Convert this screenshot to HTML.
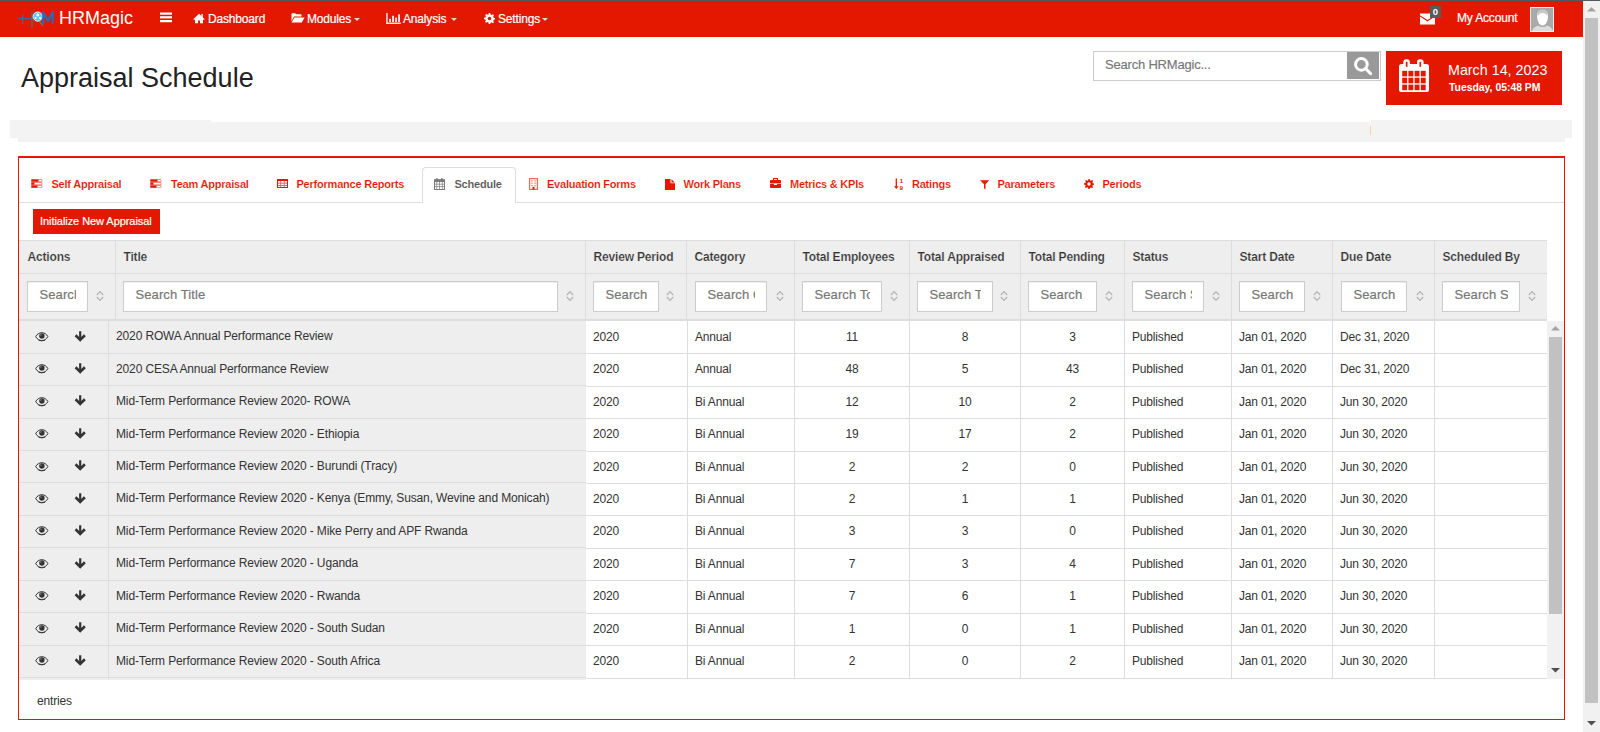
<!DOCTYPE html><html><head><meta charset='utf-8'><title>Appraisal Schedule</title><style>
*{box-sizing:border-box;margin:0;padding:0}
html,body{width:1600px;height:732px;overflow:hidden;background:#fff}
body{position:relative;font-family:"Liberation Sans",sans-serif;color:#333}
.ab{position:absolute}
.t{position:absolute;white-space:nowrap}
.s12{letter-spacing:-0.17px}.s11{letter-spacing:-0.22px}.s13{letter-spacing:-0.2px}
svg{position:absolute;display:block}
</style></head><body>
<div class='ab' style='left:0;top:0;width:1600px;height:1px;background:#4f5a5d'></div>
<div class='ab' style='left:0;top:1px;width:1583px;height:36px;background:#e41800'></div>
<svg style='left:18px;top:11px' width='36' height='18' viewBox='0 0 36 18'>
<path d='M0.7 7.6H13' stroke='#3b6aa3' stroke-width='1.3'/>
<path d='M4.7 3.8V13' stroke='#3b6aa3' stroke-width='1.3'/>
<path d='M14 0.8V16.5' stroke='#6b5c5c' stroke-width='1.8'/>
<path d='M21 9.5L25 15' stroke='#6f6f6f' stroke-width='1.4'/>
<circle cx='19.7' cy='5.6' r='4.6' fill='#58c6f2' stroke='#e8f6fb' stroke-width='0.9'/>
<circle cx='19.8' cy='4' r='1.5' fill='#fff'/>
<circle cx='17.6' cy='7' r='1.1' fill='#fff'/><circle cx='22' cy='7' r='1.1' fill='#fff'/>
<path d='M25.4 12.8V1.6L30 9.8L34.6 1.6V12.8' stroke='#1d6fc2' stroke-width='2.1' fill='none'/>
</svg>
<div class='t' style='left:59px;top:9px;font-size:18px;line-height:18px;color:#fff'>HRMagic</div>
<svg style='left:160px;top:12px' width='12' height='11'><rect x='0' y='0.5' width='12' height='2.2' fill='#fff'/><rect x='0' y='4.2' width='12' height='2.2' fill='#fff'/><rect x='0' y='8' width='12' height='2.2' fill='#fff'/></svg>
<svg style='left:193px;top:13px' width='12' height='11' viewBox='0 0 12 11'><path d='M6 0.8L0.3 6.2L1.2 7L2 6.3V10.2H5V7.5H7V10.2H10V6.3L10.8 7L11.7 6.2L9.8 4.4V1H8.4V3.1Z' fill='#fff'/></svg>
<div class='t s12' style='left:208px;top:13px;font-size:12px;line-height:12px;color:#fff;-webkit-text-stroke:0.2px #fff'>Dashboard</div>
<svg style='left:291px;top:13px' width='14' height='10' viewBox='0 0 14 10'><path d='M0.5 1.2Q0.5 0.3 1.4 0.3H4.2L5.2 1.3H9.6Q10.5 1.3 10.5 2.2V3.6H3L0.5 8.2Z' fill='#fff'/><path d='M3.4 4.4H13.6L10.8 9.6H0.6Z' fill='#fff'/></svg>
<div class='t s12' style='left:307px;top:13px;font-size:12px;line-height:12px;color:#fff;-webkit-text-stroke:0.2px #fff'>Modules</div>
<svg style='left:354px;top:18px' width='6' height='3'><path d='M0 0H6L3 3Z' fill='#d8d8d8'/></svg>
<svg style='left:386px;top:13px' width='15' height='11' viewBox='0 0 15 11'><rect x='0.3' y='0' width='1.3' height='11' fill='#fff'/><rect x='0.3' y='9.6' width='14.5' height='1.3' fill='#fff'/><rect x='3.2' y='5.8' width='1.7' height='3.3' fill='#fff'/><rect x='6.2' y='2.8' width='1.7' height='6.3' fill='#fff'/><rect x='9.2' y='4.6' width='1.7' height='4.5' fill='#fff'/><rect x='12.2' y='1.4' width='1.7' height='7.7' fill='#fff'/></svg>
<div class='t s12' style='left:403px;top:13px;font-size:12px;line-height:12px;color:#fff;-webkit-text-stroke:0.2px #fff'>Analysis</div>
<svg style='left:451px;top:18px' width='6' height='3'><path d='M0 0H6L3 3Z' fill='#d8d8d8'/></svg>
<svg style='left:484px;top:13px' width='11' height='11' viewBox='0 0 12 12'><path d='M5.2 0h1.6l.3 1.6q.7.2 1.3.6l1.4-.9 1.1 1.1-.9 1.4q.4.6.6 1.3l1.6.3v1.6l-1.6.3q-.2.7-.6 1.3l.9 1.4-1.1 1.1-1.4-.9q-.6.4-1.3.6L6.8 12H5.2l-.3-1.6q-.7-.2-1.3-.6l-1.4.9-1.1-1.1.9-1.4q-.4-.6-.6-1.3L0 6.8V5.2l1.6-.3q.2-.7.6-1.3l-.9-1.4 1.1-1.1 1.4.9q.6-.4 1.3-.6ZM6 4a2 2 0 1 0 0 4a2 2 0 1 0 0-4Z' fill='#fff' fill-rule='evenodd'/></svg>
<div class='t s12' style='left:498px;top:13px;font-size:12px;line-height:12px;color:#fff;-webkit-text-stroke:0.2px #fff'>Settings</div>
<svg style='left:542px;top:18px' width='6' height='3'><path d='M0 0H6L3 3Z' fill='#d8d8d8'/></svg>
<svg style='left:1420px;top:13px' width='15' height='12' viewBox='0 0 15 12'><path d='M0 0.5H15V2.2L7.5 7L0 2.2Z' fill='#fff'/><path d='M0 3.6L7.5 8.4L15 3.6V11.5H0Z' fill='#fff'/></svg>
<div class='ab' style='left:1430px;top:6px;width:11px;height:12px;background:#5b5b5b'></div>
<div class='t' style='left:1430px;width:11px;text-align:center;top:7px;font-size:9.5px;line-height:10px;color:#fff;font-weight:bold'>0</div>
<div class='t s12' style='left:1457px;top:12px;font-size:12px;line-height:12px;color:#fff;-webkit-text-stroke:0.2px #fff'>My Account</div>
<div class='ab' style='left:1530px;top:7px;width:24px;height:25px;background:#e8f4f4;overflow:hidden'>
<div class='ab' style='left:1px;top:1px;width:22px;height:23px;background:#a9a9a9'></div>
<svg style='left:1px;top:1px' width='23' height='23' viewBox='0 0 23 23'>
<path d='M6 8q0-6 5.5-6t5.5 6q0 5-2 7.5q-1.5 2-3.5 2t-3.5-2q-2-2.5-2-7.5Z' fill='#fff'/>
<path d='M6.5 6q0-4.5 5-4.5t5 4.5l-.5 2q-1-3-4.5-3t-4.5 3Z' fill='#c8c8c8'/>
<path d='M1 23q1-4 6-5.5q2 1.5 4.5 1.5t4.5-1.5q5 1.5 6 5.5Z' fill='#dcdcdc'/>
</svg></div>
<div class='ab' style='left:1583px;top:1px;width:17px;height:731px;background:#f1f1f1'></div>
<svg style='left:1587px;top:7px' width='9' height='5'><path d='M0 4.5L4.5 0L9 4.5Z' fill='#a3a3a3'/></svg>
<div class='ab' style='left:1585px;top:18px;width:13px;height:685px;background:#c1c1c1'></div>
<svg style='left:1587px;top:721px' width='9' height='5'><path d='M0 0H9L4.5 4.5Z' fill='#505050'/></svg>
<div class='t' style='left:21px;top:65px;font-size:27px;line-height:27px;color:#222'>Appraisal Schedule</div>
<div class='ab' style='left:1093px;top:51px;width:288px;height:30px;border:1px solid #ccc;background:#fff'></div>
<div class='t' style='left:1105px;top:58px;font-size:13px;line-height:13px;color:#777;letter-spacing:-0.2px;-webkit-text-stroke:0.15px #777'>Search HRMagic...</div>
<div class='ab' style='left:1347px;top:52px;width:32px;height:27px;background:#999'></div>
<svg style='left:1354px;top:57px' width='19' height='19' viewBox='0 0 19 19'><circle cx='7.4' cy='7.4' r='5.8' stroke='#fff' stroke-width='3' fill='none'/><path d='M11.5 11.5L16.6 16.6' stroke='#fff' stroke-width='3' stroke-linecap='round'/></svg>
<div class='ab' style='left:1386px;top:51px;width:176px;height:54px;background:#e41800'></div>
<svg style='left:1399px;top:59px' width='31' height='34' viewBox='0 0 31 34'><path d='M2.5 5Q0 5 0 7.5V31Q0 33 2 33H28Q30 33 30 31V7.5Q30 5 27.5 5Z' fill='#fff'/><rect x='4.3' y='0.3' width='6.6' height='8.6' rx='3' fill='#fff'/><rect x='18' y='0.3' width='6.6' height='8.6' rx='3' fill='#fff'/><rect x='6.8' y='2.8' width='1.7' height='5' fill='#e41800'/><rect x='20.5' y='2.8' width='1.7' height='5' fill='#e41800'/><rect x='3.2' y='11.8' width='4.9' height='5.6' fill='#e41800'/><rect x='3.2' y='18.7' width='4.9' height='5.6' fill='#e41800'/><rect x='3.2' y='25.6' width='4.9' height='5.6' fill='#e41800'/><rect x='9.4' y='11.8' width='4.9' height='5.6' fill='#e41800'/><rect x='9.4' y='18.7' width='4.9' height='5.6' fill='#e41800'/><rect x='9.4' y='25.6' width='4.9' height='5.6' fill='#e41800'/><rect x='15.6' y='11.8' width='4.9' height='5.6' fill='#e41800'/><rect x='15.6' y='18.7' width='4.9' height='5.6' fill='#e41800'/><rect x='15.6' y='25.6' width='4.9' height='5.6' fill='#e41800'/><rect x='21.8' y='11.8' width='4.9' height='5.6' fill='#e41800'/><rect x='21.8' y='18.7' width='4.9' height='5.6' fill='#e41800'/><rect x='21.8' y='25.6' width='4.9' height='5.6' fill='#e41800'/></svg>
<div class='t' style='left:1448px;top:63px;font-size:14.3px;line-height:14px;color:#fff'>March 14, 2023</div>
<div class='t' style='left:1449px;top:82px;font-size:10.4px;line-height:11px;color:#fff;font-weight:bold'>Tuesday, 05:48 PM</div>
<div class='ab' style='left:10px;top:120px;width:201px;height:18px;background:#f3f3f3'></div>
<div class='ab' style='left:18px;top:122px;width:1547px;height:20px;background:#f3f3f3'></div>
<div class='ab' style='left:1371px;top:120px;width:201px;height:18px;background:#f3f3f3'></div>
<div class='ab' style='left:1370px;top:126px;width:1px;height:9px;background:#f3d894'></div>
<div class='ab' style='left:18px;top:156px;width:1547px;height:564px;border:1px solid #e41800;border-top-width:2px'></div>
<div class='ab' style='left:19px;top:202px;width:1545px;height:1px;background:#ddd'></div>
<div class='ab' style='left:422px;top:167px;width:94px;height:36px;border:1px solid #ddd;border-bottom:0;border-radius:4px 4px 0 0;background:#fff'></div>
<svg style='left:30.5px;top:179px' width='12' height='9' viewBox='0 0 12 9'><rect x='0.45' y='0.45' width='10.6' height='2.3' rx='0.5' fill='none' stroke='#e41800' stroke-width='0.9' opacity='0.55'/><rect x='0.5' y='0.5' width='7' height='2.2' fill='#e41800'/><rect x='0.45' y='3.45' width='10.6' height='2.3' rx='0.5' fill='none' stroke='#e41800' stroke-width='0.9' opacity='0.55'/><rect x='0.5' y='3.5' width='3' height='2.2' fill='#e41800'/><rect x='0.45' y='6.45' width='10.6' height='2.3' rx='0.5' fill='none' stroke='#e41800' stroke-width='0.9' opacity='0.55'/><rect x='0.5' y='6.5' width='6' height='2.2' fill='#e41800'/></svg>
<div class='t s11' style='left:51.5px;top:179px;font-size:11px;line-height:11px;font-weight:bold;color:#e41800;-webkit-text-stroke:0.12px #fff'>Self Appraisal</div>
<svg style='left:150px;top:179px' width='12' height='9' viewBox='0 0 12 9'><rect x='0.45' y='0.45' width='10.6' height='2.3' rx='0.5' fill='none' stroke='#e41800' stroke-width='0.9' opacity='0.55'/><rect x='0.5' y='0.5' width='7' height='2.2' fill='#e41800'/><rect x='0.45' y='3.45' width='10.6' height='2.3' rx='0.5' fill='none' stroke='#e41800' stroke-width='0.9' opacity='0.55'/><rect x='0.5' y='3.5' width='3' height='2.2' fill='#e41800'/><rect x='0.45' y='6.45' width='10.6' height='2.3' rx='0.5' fill='none' stroke='#e41800' stroke-width='0.9' opacity='0.55'/><rect x='0.5' y='6.5' width='6' height='2.2' fill='#e41800'/></svg>
<div class='t s11' style='left:171px;top:179px;font-size:11px;line-height:11px;font-weight:bold;color:#e41800;-webkit-text-stroke:0.12px #fff'>Team Appraisal</div>
<svg style='left:277px;top:179px' width='11' height='9' viewBox='0 0 11 9'><rect x='0.5' y='0.5' width='10' height='8' fill='none' stroke='#e41800' stroke-width='1'/><rect x='0' y='0' width='11' height='2' fill='#e41800'/><path d='M0 4.2H11M0 6.5H11M3.7 0V9M7.3 0V9' stroke='#e41800' stroke-width='0.9' opacity='0.7'/></svg>
<div class='t s11' style='left:296.5px;top:179px;font-size:11px;line-height:11px;font-weight:bold;color:#e41800;-webkit-text-stroke:0.12px #fff'>Performance Reports</div>
<svg style='left:434px;top:178px' width='11' height='12' viewBox='0 0 11 12'><rect x='0.5' y='1.8' width='10' height='9.7' fill='none' stroke='#7a7a7a' stroke-width='1'/><rect x='0' y='1.5' width='11' height='2.5' fill='#7a7a7a'/><path d='M0 6.2H11M0 8.6H11M2.7 4V12M5.5 4V12M8.3 4V12' stroke='#7a7a7a' stroke-width='0.7'/><rect x='2.3' y='0' width='1.3' height='3' fill='#7a7a7a'/><rect x='7.3' y='0' width='1.3' height='3' fill='#7a7a7a'/></svg>
<div class='t s11' style='left:454.5px;top:179px;font-size:11px;line-height:11px;font-weight:bold;color:#555;-webkit-text-stroke:0.12px #fff'>Schedule</div>
<svg style='left:529px;top:178px' width='9' height='12' viewBox='0 0 9 12'><rect x='0.6' y='0.6' width='7.8' height='10.8' fill='none' stroke='#e41800' stroke-width='1.2' opacity='0.65'/><rect x='2.2' y='2.2' width='1.4' height='1.2' fill='#e41800' opacity='0.6'/><rect x='5.3' y='2.2' width='1.4' height='1.2' fill='#e41800' opacity='0.6'/><rect x='2.2' y='4.6' width='1.4' height='1.2' fill='#e41800' opacity='0.6'/><rect x='5.3' y='4.6' width='1.4' height='1.2' fill='#e41800' opacity='0.6'/><rect x='2.2' y='7' width='1.4' height='1.2' fill='#e41800' opacity='0.6'/><rect x='5.3' y='7' width='1.4' height='1.2' fill='#e41800' opacity='0.6'/><rect x='3.5' y='8.8' width='2' height='2.8' fill='#e41800'/></svg>
<div class='t s11' style='left:547px;top:179px;font-size:11px;line-height:11px;font-weight:bold;color:#e41800;-webkit-text-stroke:0.12px #fff'>Evaluation Forms</div>
<svg style='left:665px;top:178.5px' width='10' height='11' viewBox='0 0 10 11'><path d='M0 0H5.5V4.3H10V11H0Z' fill='#e41800'/><path d='M6.5 0.2L9.8 3.4H6.5Z' fill='#e41800'/></svg>
<div class='t s11' style='left:683.5px;top:179px;font-size:11px;line-height:11px;font-weight:bold;color:#e41800;-webkit-text-stroke:0.12px #fff'>Work Plans</div>
<svg style='left:770px;top:178px' width='11' height='10' viewBox='0 0 11 10'><path d='M3.5 2V0.5H7.5V2' fill='none' stroke='#e41800' stroke-width='1.1'/><rect x='0' y='2' width='11' height='3.2' rx='0.7' fill='#e41800'/><path d='M0 5.8H4V7H7V5.8H11V9.2Q11 10 10.3 10H0.7Q0 10 0 9.2Z' fill='#e41800'/></svg>
<div class='t s11' style='left:790px;top:179px;font-size:11px;line-height:11px;font-weight:bold;color:#e41800;-webkit-text-stroke:0.12px #fff'>Metrics &amp; KPIs</div>
<svg style='left:894px;top:178px' width='10' height='12' viewBox='0 0 10 12'><path d='M2.3 0.5V9' stroke='#e41800' stroke-width='1.3'/><path d='M0 8.3H4.6L2.3 11Z' fill='#e41800'/><text x='5.8' y='5.2' font-family='Liberation Sans' font-size='6.2' font-weight='bold' fill='#e41800'>1</text><text x='5.6' y='11.8' font-family='Liberation Sans' font-size='6.2' font-weight='bold' fill='#e41800'>9</text></svg>
<div class='t s11' style='left:912px;top:179px;font-size:11px;line-height:11px;font-weight:bold;color:#e41800;-webkit-text-stroke:0.12px #fff'>Ratings</div>
<svg style='left:979.5px;top:179.5px' width='10' height='10' viewBox='0 0 10 10'><path d='M0 0.3H9.2L5.5 4.3V9.5L4 8.2V4.3Z' fill='#e41800'/></svg>
<div class='t s11' style='left:997.5px;top:179px;font-size:11px;line-height:11px;font-weight:bold;color:#e41800;-webkit-text-stroke:0.12px #fff'>Parameters</div>
<svg style='left:1084px;top:179px' width='10' height='10' viewBox='0 0 12 12'><path d='M5.2 0h1.6l.3 1.6q.7.2 1.3.6l1.4-.9 1.1 1.1-.9 1.4q.4.6.6 1.3l1.6.3v1.6l-1.6.3q-.2.7-.6 1.3l.9 1.4-1.1 1.1-1.4-.9q-.6.4-1.3.6L6.8 12H5.2l-.3-1.6q-.7-.2-1.3-.6l-1.4.9-1.1-1.1.9-1.4q-.4-.6-.6-1.3L0 6.8V5.2l1.6-.3q.2-.7.6-1.3l-.9-1.4 1.1-1.1 1.4.9q.6-.4 1.3-.6ZM6 4a2 2 0 1 0 0 4a2 2 0 1 0 0-4Z' fill='#e41800' fill-rule='evenodd'/></svg>
<div class='t s11' style='left:1102.5px;top:179px;font-size:11px;line-height:11px;font-weight:bold;color:#e41800;-webkit-text-stroke:0.12px #fff'>Periods</div>
<div class='ab' style='left:33px;top:209px;width:127px;height:25px;background:#e41800'></div>
<div class='t' style='left:40px;top:216px;font-size:11px;line-height:11px;color:#fff;letter-spacing:-0.06px;-webkit-text-stroke:0.2px #fff'>Initialize New Appraisal</div>
<div class='ab' style='left:19px;top:240px;width:1528px;height:81px;background:#eee'></div>
<div class='ab' style='left:19px;top:240px;width:1528px;height:1px;background:#ddd'></div>
<div class='ab' style='left:19px;top:273px;width:1528px;height:1px;background:#ddd'></div>
<div class='ab' style='left:19px;top:319px;width:1528px;height:2px;background:#ddd'></div>
<div class='ab' style='left:115px;top:240px;width:1px;height:81px;background:#ddd'></div>
<div class='ab' style='left:585px;top:240px;width:1px;height:81px;background:#ddd'></div>
<div class='ab' style='left:686px;top:240px;width:1px;height:81px;background:#ddd'></div>
<div class='ab' style='left:794px;top:240px;width:1px;height:81px;background:#ddd'></div>
<div class='ab' style='left:909px;top:240px;width:1px;height:81px;background:#ddd'></div>
<div class='ab' style='left:1020px;top:240px;width:1px;height:81px;background:#ddd'></div>
<div class='ab' style='left:1124px;top:240px;width:1px;height:81px;background:#ddd'></div>
<div class='ab' style='left:1231px;top:240px;width:1px;height:81px;background:#ddd'></div>
<div class='ab' style='left:1332px;top:240px;width:1px;height:81px;background:#ddd'></div>
<div class='ab' style='left:1434px;top:240px;width:1px;height:81px;background:#ddd'></div>
<div class='t s12' style='left:27.5px;top:251px;font-size:12px;line-height:12px;font-weight:bold;color:#333;-webkit-text-stroke:0.2px #eee'>Actions</div>
<div class='ab' style='left:27px;top:281px;width:61px;height:31px;border:1px solid #ccc;background:#fff;box-shadow:inset 0 1px 1px rgba(0,0,0,.075);overflow:hidden'><div class='ab' style='left:11px;top:0;width:37px;height:29px;overflow:hidden'><div class='t' style='left:0.5px;top:6px;font-size:13px;line-height:13px;color:#777;letter-spacing:0.1px;-webkit-text-stroke:0.2px #777'>Search</div></div></div>
<svg style='left:96px;top:290px' width='8' height='12' viewBox='0 0 8 12'><path d='M0.8 5L4 1.6L7.2 5M0.8 7L4 10.4L7.2 7' stroke='#b5b5b5' stroke-width='1.3' fill='none'/></svg>
<div class='t s12' style='left:123.5px;top:251px;font-size:12px;line-height:12px;font-weight:bold;color:#333;-webkit-text-stroke:0.2px #eee'>Title</div>
<div class='ab' style='left:123px;top:281px;width:435px;height:31px;border:1px solid #ccc;background:#fff;box-shadow:inset 0 1px 1px rgba(0,0,0,.075);overflow:hidden'><div class='ab' style='left:11px;top:0;width:411px;height:29px;overflow:hidden'><div class='t' style='left:0.5px;top:6px;font-size:13px;line-height:13px;color:#777;letter-spacing:0.1px;-webkit-text-stroke:0.2px #777'>Search Title</div></div></div>
<svg style='left:566px;top:290px' width='8' height='12' viewBox='0 0 8 12'><path d='M0.8 5L4 1.6L7.2 5M0.8 7L4 10.4L7.2 7' stroke='#b5b5b5' stroke-width='1.3' fill='none'/></svg>
<div class='t s12' style='left:593.5px;top:251px;font-size:12px;line-height:12px;font-weight:bold;color:#333;-webkit-text-stroke:0.2px #eee'>Review Period</div>
<div class='ab' style='left:593px;top:281px;width:66px;height:31px;border:1px solid #ccc;background:#fff;box-shadow:inset 0 1px 1px rgba(0,0,0,.075);overflow:hidden'><div class='ab' style='left:11px;top:0;width:42px;height:29px;overflow:hidden'><div class='t' style='left:0.5px;top:6px;font-size:13px;line-height:13px;color:#777;letter-spacing:0.1px;-webkit-text-stroke:0.2px #777'>Search</div></div></div>
<svg style='left:666px;top:290px' width='8' height='12' viewBox='0 0 8 12'><path d='M0.8 5L4 1.6L7.2 5M0.8 7L4 10.4L7.2 7' stroke='#b5b5b5' stroke-width='1.3' fill='none'/></svg>
<div class='t s12' style='left:694.5px;top:251px;font-size:12px;line-height:12px;font-weight:bold;color:#333;-webkit-text-stroke:0.2px #eee'>Category</div>
<div class='ab' style='left:695px;top:281px;width:72px;height:31px;border:1px solid #ccc;background:#fff;box-shadow:inset 0 1px 1px rgba(0,0,0,.075);overflow:hidden'><div class='ab' style='left:11px;top:0;width:48px;height:29px;overflow:hidden'><div class='t' style='left:0.5px;top:6px;font-size:13px;line-height:13px;color:#777;letter-spacing:0.1px;-webkit-text-stroke:0.2px #777'>Search Category</div></div></div>
<svg style='left:775.5px;top:290px' width='8' height='12' viewBox='0 0 8 12'><path d='M0.8 5L4 1.6L7.2 5M0.8 7L4 10.4L7.2 7' stroke='#b5b5b5' stroke-width='1.3' fill='none'/></svg>
<div class='t s12' style='left:802.5px;top:251px;font-size:12px;line-height:12px;font-weight:bold;color:#333;-webkit-text-stroke:0.2px #eee'>Total Employees</div>
<div class='ab' style='left:802px;top:281px;width:80px;height:31px;border:1px solid #ccc;background:#fff;box-shadow:inset 0 1px 1px rgba(0,0,0,.075);overflow:hidden'><div class='ab' style='left:11px;top:0;width:56px;height:29px;overflow:hidden'><div class='t' style='left:0.5px;top:6px;font-size:13px;line-height:13px;color:#777;letter-spacing:0.1px;-webkit-text-stroke:0.2px #777'>Search Total</div></div></div>
<svg style='left:889.5px;top:290px' width='8' height='12' viewBox='0 0 8 12'><path d='M0.8 5L4 1.6L7.2 5M0.8 7L4 10.4L7.2 7' stroke='#b5b5b5' stroke-width='1.3' fill='none'/></svg>
<div class='t s12' style='left:917.5px;top:251px;font-size:12px;line-height:12px;font-weight:bold;color:#333;-webkit-text-stroke:0.2px #eee'>Total Appraised</div>
<div class='ab' style='left:917px;top:281px;width:76px;height:31px;border:1px solid #ccc;background:#fff;box-shadow:inset 0 1px 1px rgba(0,0,0,.075);overflow:hidden'><div class='ab' style='left:11px;top:0;width:52px;height:29px;overflow:hidden'><div class='t' style='left:0.5px;top:6px;font-size:13px;line-height:13px;color:#777;letter-spacing:0.1px;-webkit-text-stroke:0.2px #777'>Search Total</div></div></div>
<svg style='left:1000px;top:290px' width='8' height='12' viewBox='0 0 8 12'><path d='M0.8 5L4 1.6L7.2 5M0.8 7L4 10.4L7.2 7' stroke='#b5b5b5' stroke-width='1.3' fill='none'/></svg>
<div class='t s12' style='left:1028.5px;top:251px;font-size:12px;line-height:12px;font-weight:bold;color:#333;-webkit-text-stroke:0.2px #eee'>Total Pending</div>
<div class='ab' style='left:1028px;top:281px;width:69px;height:31px;border:1px solid #ccc;background:#fff;box-shadow:inset 0 1px 1px rgba(0,0,0,.075);overflow:hidden'><div class='ab' style='left:11px;top:0;width:45px;height:29px;overflow:hidden'><div class='t' style='left:0.5px;top:6px;font-size:13px;line-height:13px;color:#777;letter-spacing:0.1px;-webkit-text-stroke:0.2px #777'>Search</div></div></div>
<svg style='left:1104.5px;top:290px' width='8' height='12' viewBox='0 0 8 12'><path d='M0.8 5L4 1.6L7.2 5M0.8 7L4 10.4L7.2 7' stroke='#b5b5b5' stroke-width='1.3' fill='none'/></svg>
<div class='t s12' style='left:1132.5px;top:251px;font-size:12px;line-height:12px;font-weight:bold;color:#333;-webkit-text-stroke:0.2px #eee'>Status</div>
<div class='ab' style='left:1132px;top:281px;width:72px;height:31px;border:1px solid #ccc;background:#fff;box-shadow:inset 0 1px 1px rgba(0,0,0,.075);overflow:hidden'><div class='ab' style='left:11px;top:0;width:48px;height:29px;overflow:hidden'><div class='t' style='left:0.5px;top:6px;font-size:13px;line-height:13px;color:#777;letter-spacing:0.1px;-webkit-text-stroke:0.2px #777'>Search Status</div></div></div>
<svg style='left:1211.5px;top:290px' width='8' height='12' viewBox='0 0 8 12'><path d='M0.8 5L4 1.6L7.2 5M0.8 7L4 10.4L7.2 7' stroke='#b5b5b5' stroke-width='1.3' fill='none'/></svg>
<div class='t s12' style='left:1239.5px;top:251px;font-size:12px;line-height:12px;font-weight:bold;color:#333;-webkit-text-stroke:0.2px #eee'>Start Date</div>
<div class='ab' style='left:1239px;top:281px;width:66px;height:31px;border:1px solid #ccc;background:#fff;box-shadow:inset 0 1px 1px rgba(0,0,0,.075);overflow:hidden'><div class='ab' style='left:11px;top:0;width:42px;height:29px;overflow:hidden'><div class='t' style='left:0.5px;top:6px;font-size:13px;line-height:13px;color:#777;letter-spacing:0.1px;-webkit-text-stroke:0.2px #777'>Search</div></div></div>
<svg style='left:1312.5px;top:290px' width='8' height='12' viewBox='0 0 8 12'><path d='M0.8 5L4 1.6L7.2 5M0.8 7L4 10.4L7.2 7' stroke='#b5b5b5' stroke-width='1.3' fill='none'/></svg>
<div class='t s12' style='left:1340.5px;top:251px;font-size:12px;line-height:12px;font-weight:bold;color:#333;-webkit-text-stroke:0.2px #eee'>Due Date</div>
<div class='ab' style='left:1341px;top:281px;width:66px;height:31px;border:1px solid #ccc;background:#fff;box-shadow:inset 0 1px 1px rgba(0,0,0,.075);overflow:hidden'><div class='ab' style='left:11px;top:0;width:42px;height:29px;overflow:hidden'><div class='t' style='left:0.5px;top:6px;font-size:13px;line-height:13px;color:#777;letter-spacing:0.1px;-webkit-text-stroke:0.2px #777'>Search</div></div></div>
<svg style='left:1416px;top:290px' width='8' height='12' viewBox='0 0 8 12'><path d='M0.8 5L4 1.6L7.2 5M0.8 7L4 10.4L7.2 7' stroke='#b5b5b5' stroke-width='1.3' fill='none'/></svg>
<div class='t s12' style='left:1442.5px;top:251px;font-size:12px;line-height:12px;font-weight:bold;color:#333;-webkit-text-stroke:0.2px #eee'>Scheduled By</div>
<div class='ab' style='left:1442px;top:281px;width:78px;height:31px;border:1px solid #ccc;background:#fff;box-shadow:inset 0 1px 1px rgba(0,0,0,.075);overflow:hidden'><div class='ab' style='left:11px;top:0;width:54px;height:29px;overflow:hidden'><div class='t' style='left:0.5px;top:6px;font-size:13px;line-height:13px;color:#777;letter-spacing:0.1px;-webkit-text-stroke:0.2px #777'>Search Scheduled</div></div></div>
<svg style='left:1528px;top:290px' width='8' height='12' viewBox='0 0 8 12'><path d='M0.8 5L4 1.6L7.2 5M0.8 7L4 10.4L7.2 7' stroke='#b5b5b5' stroke-width='1.3' fill='none'/></svg>
<div class='ab' style='left:586px;top:321px;width:961px;height:358px;background:#fff'></div>
<div class='ab' style='left:586px;top:353.12px;width:961px;height:1px;background:#ddd'></div>
<div class='t s12' style='left:593px;top:331px;font-size:12px;line-height:12px'>2020</div>
<div class='t s12' style='left:695px;top:331px;font-size:12px;line-height:12px'>Annual</div>
<div class='t s12' style='left:794.5px;width:115px;text-align:center;top:331px;font-size:12px;line-height:12px'>11</div>
<div class='t s12' style='left:909.5px;width:111px;text-align:center;top:331px;font-size:12px;line-height:12px'>8</div>
<div class='t s12' style='left:1020.5px;width:104px;text-align:center;top:331px;font-size:12px;line-height:12px'>3</div>
<div class='t s12' style='left:1132px;top:331px;font-size:12px;line-height:12px'>Published</div>
<div class='t s12' style='left:1239px;top:331px;font-size:12px;line-height:12px'>Jan 01, 2020</div>
<div class='t s12' style='left:1340px;top:331px;font-size:12px;line-height:12px'>Dec 31, 2020</div>
<div class='ab' style='left:586px;top:385.59px;width:961px;height:1px;background:#ddd'></div>
<div class='t s12' style='left:593px;top:363px;font-size:12px;line-height:12px'>2020</div>
<div class='t s12' style='left:695px;top:363px;font-size:12px;line-height:12px'>Annual</div>
<div class='t s12' style='left:794.5px;width:115px;text-align:center;top:363px;font-size:12px;line-height:12px'>48</div>
<div class='t s12' style='left:909.5px;width:111px;text-align:center;top:363px;font-size:12px;line-height:12px'>5</div>
<div class='t s12' style='left:1020.5px;width:104px;text-align:center;top:363px;font-size:12px;line-height:12px'>43</div>
<div class='t s12' style='left:1132px;top:363px;font-size:12px;line-height:12px'>Published</div>
<div class='t s12' style='left:1239px;top:363px;font-size:12px;line-height:12px'>Jan 01, 2020</div>
<div class='t s12' style='left:1340px;top:363px;font-size:12px;line-height:12px'>Dec 31, 2020</div>
<div class='ab' style='left:586px;top:418.06px;width:961px;height:1px;background:#ddd'></div>
<div class='t s12' style='left:593px;top:396px;font-size:12px;line-height:12px'>2020</div>
<div class='t s12' style='left:695px;top:396px;font-size:12px;line-height:12px'>Bi Annual</div>
<div class='t s12' style='left:794.5px;width:115px;text-align:center;top:396px;font-size:12px;line-height:12px'>12</div>
<div class='t s12' style='left:909.5px;width:111px;text-align:center;top:396px;font-size:12px;line-height:12px'>10</div>
<div class='t s12' style='left:1020.5px;width:104px;text-align:center;top:396px;font-size:12px;line-height:12px'>2</div>
<div class='t s12' style='left:1132px;top:396px;font-size:12px;line-height:12px'>Published</div>
<div class='t s12' style='left:1239px;top:396px;font-size:12px;line-height:12px'>Jan 01, 2020</div>
<div class='t s12' style='left:1340px;top:396px;font-size:12px;line-height:12px'>Jun 30, 2020</div>
<div class='ab' style='left:586px;top:450.53px;width:961px;height:1px;background:#ddd'></div>
<div class='t s12' style='left:593px;top:428px;font-size:12px;line-height:12px'>2020</div>
<div class='t s12' style='left:695px;top:428px;font-size:12px;line-height:12px'>Bi Annual</div>
<div class='t s12' style='left:794.5px;width:115px;text-align:center;top:428px;font-size:12px;line-height:12px'>19</div>
<div class='t s12' style='left:909.5px;width:111px;text-align:center;top:428px;font-size:12px;line-height:12px'>17</div>
<div class='t s12' style='left:1020.5px;width:104px;text-align:center;top:428px;font-size:12px;line-height:12px'>2</div>
<div class='t s12' style='left:1132px;top:428px;font-size:12px;line-height:12px'>Published</div>
<div class='t s12' style='left:1239px;top:428px;font-size:12px;line-height:12px'>Jan 01, 2020</div>
<div class='t s12' style='left:1340px;top:428px;font-size:12px;line-height:12px'>Jun 30, 2020</div>
<div class='ab' style='left:586px;top:483.00px;width:961px;height:1px;background:#ddd'></div>
<div class='t s12' style='left:593px;top:461px;font-size:12px;line-height:12px'>2020</div>
<div class='t s12' style='left:695px;top:461px;font-size:12px;line-height:12px'>Bi Annual</div>
<div class='t s12' style='left:794.5px;width:115px;text-align:center;top:461px;font-size:12px;line-height:12px'>2</div>
<div class='t s12' style='left:909.5px;width:111px;text-align:center;top:461px;font-size:12px;line-height:12px'>2</div>
<div class='t s12' style='left:1020.5px;width:104px;text-align:center;top:461px;font-size:12px;line-height:12px'>0</div>
<div class='t s12' style='left:1132px;top:461px;font-size:12px;line-height:12px'>Published</div>
<div class='t s12' style='left:1239px;top:461px;font-size:12px;line-height:12px'>Jan 01, 2020</div>
<div class='t s12' style='left:1340px;top:461px;font-size:12px;line-height:12px'>Jun 30, 2020</div>
<div class='ab' style='left:586px;top:515.47px;width:961px;height:1px;background:#ddd'></div>
<div class='t s12' style='left:593px;top:493px;font-size:12px;line-height:12px'>2020</div>
<div class='t s12' style='left:695px;top:493px;font-size:12px;line-height:12px'>Bi Annual</div>
<div class='t s12' style='left:794.5px;width:115px;text-align:center;top:493px;font-size:12px;line-height:12px'>2</div>
<div class='t s12' style='left:909.5px;width:111px;text-align:center;top:493px;font-size:12px;line-height:12px'>1</div>
<div class='t s12' style='left:1020.5px;width:104px;text-align:center;top:493px;font-size:12px;line-height:12px'>1</div>
<div class='t s12' style='left:1132px;top:493px;font-size:12px;line-height:12px'>Published</div>
<div class='t s12' style='left:1239px;top:493px;font-size:12px;line-height:12px'>Jan 01, 2020</div>
<div class='t s12' style='left:1340px;top:493px;font-size:12px;line-height:12px'>Jun 30, 2020</div>
<div class='ab' style='left:586px;top:547.94px;width:961px;height:1px;background:#ddd'></div>
<div class='t s12' style='left:593px;top:525px;font-size:12px;line-height:12px'>2020</div>
<div class='t s12' style='left:695px;top:525px;font-size:12px;line-height:12px'>Bi Annual</div>
<div class='t s12' style='left:794.5px;width:115px;text-align:center;top:525px;font-size:12px;line-height:12px'>3</div>
<div class='t s12' style='left:909.5px;width:111px;text-align:center;top:525px;font-size:12px;line-height:12px'>3</div>
<div class='t s12' style='left:1020.5px;width:104px;text-align:center;top:525px;font-size:12px;line-height:12px'>0</div>
<div class='t s12' style='left:1132px;top:525px;font-size:12px;line-height:12px'>Published</div>
<div class='t s12' style='left:1239px;top:525px;font-size:12px;line-height:12px'>Jan 01, 2020</div>
<div class='t s12' style='left:1340px;top:525px;font-size:12px;line-height:12px'>Jun 30, 2020</div>
<div class='ab' style='left:586px;top:580.41px;width:961px;height:1px;background:#ddd'></div>
<div class='t s12' style='left:593px;top:558px;font-size:12px;line-height:12px'>2020</div>
<div class='t s12' style='left:695px;top:558px;font-size:12px;line-height:12px'>Bi Annual</div>
<div class='t s12' style='left:794.5px;width:115px;text-align:center;top:558px;font-size:12px;line-height:12px'>7</div>
<div class='t s12' style='left:909.5px;width:111px;text-align:center;top:558px;font-size:12px;line-height:12px'>3</div>
<div class='t s12' style='left:1020.5px;width:104px;text-align:center;top:558px;font-size:12px;line-height:12px'>4</div>
<div class='t s12' style='left:1132px;top:558px;font-size:12px;line-height:12px'>Published</div>
<div class='t s12' style='left:1239px;top:558px;font-size:12px;line-height:12px'>Jan 01, 2020</div>
<div class='t s12' style='left:1340px;top:558px;font-size:12px;line-height:12px'>Jun 30, 2020</div>
<div class='ab' style='left:586px;top:612.88px;width:961px;height:1px;background:#ddd'></div>
<div class='t s12' style='left:593px;top:590px;font-size:12px;line-height:12px'>2020</div>
<div class='t s12' style='left:695px;top:590px;font-size:12px;line-height:12px'>Bi Annual</div>
<div class='t s12' style='left:794.5px;width:115px;text-align:center;top:590px;font-size:12px;line-height:12px'>7</div>
<div class='t s12' style='left:909.5px;width:111px;text-align:center;top:590px;font-size:12px;line-height:12px'>6</div>
<div class='t s12' style='left:1020.5px;width:104px;text-align:center;top:590px;font-size:12px;line-height:12px'>1</div>
<div class='t s12' style='left:1132px;top:590px;font-size:12px;line-height:12px'>Published</div>
<div class='t s12' style='left:1239px;top:590px;font-size:12px;line-height:12px'>Jan 01, 2020</div>
<div class='t s12' style='left:1340px;top:590px;font-size:12px;line-height:12px'>Jun 30, 2020</div>
<div class='ab' style='left:586px;top:645.35px;width:961px;height:1px;background:#ddd'></div>
<div class='t s12' style='left:593px;top:623px;font-size:12px;line-height:12px'>2020</div>
<div class='t s12' style='left:695px;top:623px;font-size:12px;line-height:12px'>Bi Annual</div>
<div class='t s12' style='left:794.5px;width:115px;text-align:center;top:623px;font-size:12px;line-height:12px'>1</div>
<div class='t s12' style='left:909.5px;width:111px;text-align:center;top:623px;font-size:12px;line-height:12px'>0</div>
<div class='t s12' style='left:1020.5px;width:104px;text-align:center;top:623px;font-size:12px;line-height:12px'>1</div>
<div class='t s12' style='left:1132px;top:623px;font-size:12px;line-height:12px'>Published</div>
<div class='t s12' style='left:1239px;top:623px;font-size:12px;line-height:12px'>Jan 01, 2020</div>
<div class='t s12' style='left:1340px;top:623px;font-size:12px;line-height:12px'>Jun 30, 2020</div>
<div class='ab' style='left:586px;top:677.82px;width:961px;height:1px;background:#ddd'></div>
<div class='t s12' style='left:593px;top:655px;font-size:12px;line-height:12px'>2020</div>
<div class='t s12' style='left:695px;top:655px;font-size:12px;line-height:12px'>Bi Annual</div>
<div class='t s12' style='left:794.5px;width:115px;text-align:center;top:655px;font-size:12px;line-height:12px'>2</div>
<div class='t s12' style='left:909.5px;width:111px;text-align:center;top:655px;font-size:12px;line-height:12px'>0</div>
<div class='t s12' style='left:1020.5px;width:104px;text-align:center;top:655px;font-size:12px;line-height:12px'>2</div>
<div class='t s12' style='left:1132px;top:655px;font-size:12px;line-height:12px'>Published</div>
<div class='t s12' style='left:1239px;top:655px;font-size:12px;line-height:12px'>Jan 01, 2020</div>
<div class='t s12' style='left:1340px;top:655px;font-size:12px;line-height:12px'>Jun 30, 2020</div>
<div class='ab' style='left:687px;top:321px;width:1px;height:358px;background:#ddd'></div>
<div class='ab' style='left:794px;top:321px;width:1px;height:358px;background:#ddd'></div>
<div class='ab' style='left:909px;top:321px;width:1px;height:358px;background:#ddd'></div>
<div class='ab' style='left:1020px;top:321px;width:1px;height:358px;background:#ddd'></div>
<div class='ab' style='left:1124px;top:321px;width:1px;height:358px;background:#ddd'></div>
<div class='ab' style='left:1231px;top:321px;width:1px;height:358px;background:#ddd'></div>
<div class='ab' style='left:1332px;top:321px;width:1px;height:358px;background:#ddd'></div>
<div class='ab' style='left:1434px;top:321px;width:1px;height:358px;background:#ddd'></div>
<div class='ab' style='left:19px;top:321px;width:567px;height:359px;background:#eee'></div>
<div class='ab' style='left:19px;top:352.72px;width:567px;height:1px;background:#ddd'></div>
<div class='t' style='left:116px;top:330px;font-size:12px;line-height:12px;letter-spacing:-0.13px'>2020 ROWA Annual Performance Review</div>
<svg style='left:35px;top:332px' width='14' height='10' viewBox='0 0 14 10'><path d='M0.7 4.6C2.2 1.8 4.5 0.7 6.8 0.7C9.1 0.7 11.4 1.8 12.9 4.6C11.4 7.4 9.1 8.5 6.8 8.5C4.5 8.5 2.2 7.4 0.7 4.6Z' fill='none' stroke='#333' stroke-width='1'/><path d='M3.5 8.2Q6.8 9.6 10.1 8.2' stroke='#333' stroke-width='0.9' fill='none'/><circle cx='6.9' cy='4' r='2.7' fill='#333'/><circle cx='5.9' cy='3' r='0.8' fill='#888'/></svg>
<svg style='left:74px;top:331px' width='12' height='11' viewBox='0 0 12 11'><path d='M5.1 0.2H7.3V5.9L9.9 3.3L11.8 5.2L6.2 10.8L0.6 5.2L2.5 3.3L5.1 5.9Z' fill='#333'/></svg>
<div class='ab' style='left:19px;top:385.14px;width:567px;height:1px;background:#ddd'></div>
<div class='t' style='left:116px;top:363px;font-size:12px;line-height:12px;letter-spacing:-0.13px'>2020 CESA Annual Performance Review</div>
<svg style='left:35px;top:364px' width='14' height='10' viewBox='0 0 14 10'><path d='M0.7 4.6C2.2 1.8 4.5 0.7 6.8 0.7C9.1 0.7 11.4 1.8 12.9 4.6C11.4 7.4 9.1 8.5 6.8 8.5C4.5 8.5 2.2 7.4 0.7 4.6Z' fill='none' stroke='#333' stroke-width='1'/><path d='M3.5 8.2Q6.8 9.6 10.1 8.2' stroke='#333' stroke-width='0.9' fill='none'/><circle cx='6.9' cy='4' r='2.7' fill='#333'/><circle cx='5.9' cy='3' r='0.8' fill='#888'/></svg>
<svg style='left:74px;top:363px' width='12' height='11' viewBox='0 0 12 11'><path d='M5.1 0.2H7.3V5.9L9.9 3.3L11.8 5.2L6.2 10.8L0.6 5.2L2.5 3.3L5.1 5.9Z' fill='#333'/></svg>
<div class='ab' style='left:19px;top:417.56px;width:567px;height:1px;background:#ddd'></div>
<div class='t' style='left:116px;top:395px;font-size:12px;line-height:12px;letter-spacing:-0.13px'>Mid-Term Performance Review 2020- ROWA</div>
<svg style='left:35px;top:397px' width='14' height='10' viewBox='0 0 14 10'><path d='M0.7 4.6C2.2 1.8 4.5 0.7 6.8 0.7C9.1 0.7 11.4 1.8 12.9 4.6C11.4 7.4 9.1 8.5 6.8 8.5C4.5 8.5 2.2 7.4 0.7 4.6Z' fill='none' stroke='#333' stroke-width='1'/><path d='M3.5 8.2Q6.8 9.6 10.1 8.2' stroke='#333' stroke-width='0.9' fill='none'/><circle cx='6.9' cy='4' r='2.7' fill='#333'/><circle cx='5.9' cy='3' r='0.8' fill='#888'/></svg>
<svg style='left:74px;top:395px' width='12' height='11' viewBox='0 0 12 11'><path d='M5.1 0.2H7.3V5.9L9.9 3.3L11.8 5.2L6.2 10.8L0.6 5.2L2.5 3.3L5.1 5.9Z' fill='#333'/></svg>
<div class='ab' style='left:19px;top:449.98px;width:567px;height:1px;background:#ddd'></div>
<div class='t' style='left:116px;top:428px;font-size:12px;line-height:12px;letter-spacing:-0.13px'>Mid-Term Performance Review 2020 - Ethiopia</div>
<svg style='left:35px;top:429px' width='14' height='10' viewBox='0 0 14 10'><path d='M0.7 4.6C2.2 1.8 4.5 0.7 6.8 0.7C9.1 0.7 11.4 1.8 12.9 4.6C11.4 7.4 9.1 8.5 6.8 8.5C4.5 8.5 2.2 7.4 0.7 4.6Z' fill='none' stroke='#333' stroke-width='1'/><path d='M3.5 8.2Q6.8 9.6 10.1 8.2' stroke='#333' stroke-width='0.9' fill='none'/><circle cx='6.9' cy='4' r='2.7' fill='#333'/><circle cx='5.9' cy='3' r='0.8' fill='#888'/></svg>
<svg style='left:74px;top:428px' width='12' height='11' viewBox='0 0 12 11'><path d='M5.1 0.2H7.3V5.9L9.9 3.3L11.8 5.2L6.2 10.8L0.6 5.2L2.5 3.3L5.1 5.9Z' fill='#333'/></svg>
<div class='ab' style='left:19px;top:482.40px;width:567px;height:1px;background:#ddd'></div>
<div class='t' style='left:116px;top:460px;font-size:12px;line-height:12px;letter-spacing:-0.13px'>Mid-Term Performance Review 2020 - Burundi (Tracy)</div>
<svg style='left:35px;top:462px' width='14' height='10' viewBox='0 0 14 10'><path d='M0.7 4.6C2.2 1.8 4.5 0.7 6.8 0.7C9.1 0.7 11.4 1.8 12.9 4.6C11.4 7.4 9.1 8.5 6.8 8.5C4.5 8.5 2.2 7.4 0.7 4.6Z' fill='none' stroke='#333' stroke-width='1'/><path d='M3.5 8.2Q6.8 9.6 10.1 8.2' stroke='#333' stroke-width='0.9' fill='none'/><circle cx='6.9' cy='4' r='2.7' fill='#333'/><circle cx='5.9' cy='3' r='0.8' fill='#888'/></svg>
<svg style='left:74px;top:460px' width='12' height='11' viewBox='0 0 12 11'><path d='M5.1 0.2H7.3V5.9L9.9 3.3L11.8 5.2L6.2 10.8L0.6 5.2L2.5 3.3L5.1 5.9Z' fill='#333'/></svg>
<div class='ab' style='left:19px;top:514.82px;width:567px;height:1px;background:#ddd'></div>
<div class='t' style='left:116px;top:492px;font-size:12px;line-height:12px;letter-spacing:-0.13px'>Mid-Term Performance Review 2020 - Kenya (Emmy, Susan, Wevine and Monicah)</div>
<svg style='left:35px;top:494px' width='14' height='10' viewBox='0 0 14 10'><path d='M0.7 4.6C2.2 1.8 4.5 0.7 6.8 0.7C9.1 0.7 11.4 1.8 12.9 4.6C11.4 7.4 9.1 8.5 6.8 8.5C4.5 8.5 2.2 7.4 0.7 4.6Z' fill='none' stroke='#333' stroke-width='1'/><path d='M3.5 8.2Q6.8 9.6 10.1 8.2' stroke='#333' stroke-width='0.9' fill='none'/><circle cx='6.9' cy='4' r='2.7' fill='#333'/><circle cx='5.9' cy='3' r='0.8' fill='#888'/></svg>
<svg style='left:74px;top:493px' width='12' height='11' viewBox='0 0 12 11'><path d='M5.1 0.2H7.3V5.9L9.9 3.3L11.8 5.2L6.2 10.8L0.6 5.2L2.5 3.3L5.1 5.9Z' fill='#333'/></svg>
<div class='ab' style='left:19px;top:547.24px;width:567px;height:1px;background:#ddd'></div>
<div class='t' style='left:116px;top:525px;font-size:12px;line-height:12px;letter-spacing:-0.13px'>Mid-Term Performance Review 2020 - Mike Perry and APF Rwanda</div>
<svg style='left:35px;top:526px' width='14' height='10' viewBox='0 0 14 10'><path d='M0.7 4.6C2.2 1.8 4.5 0.7 6.8 0.7C9.1 0.7 11.4 1.8 12.9 4.6C11.4 7.4 9.1 8.5 6.8 8.5C4.5 8.5 2.2 7.4 0.7 4.6Z' fill='none' stroke='#333' stroke-width='1'/><path d='M3.5 8.2Q6.8 9.6 10.1 8.2' stroke='#333' stroke-width='0.9' fill='none'/><circle cx='6.9' cy='4' r='2.7' fill='#333'/><circle cx='5.9' cy='3' r='0.8' fill='#888'/></svg>
<svg style='left:74px;top:525px' width='12' height='11' viewBox='0 0 12 11'><path d='M5.1 0.2H7.3V5.9L9.9 3.3L11.8 5.2L6.2 10.8L0.6 5.2L2.5 3.3L5.1 5.9Z' fill='#333'/></svg>
<div class='ab' style='left:19px;top:579.66px;width:567px;height:1px;background:#ddd'></div>
<div class='t' style='left:116px;top:557px;font-size:12px;line-height:12px;letter-spacing:-0.13px'>Mid-Term Performance Review 2020 - Uganda</div>
<svg style='left:35px;top:559px' width='14' height='10' viewBox='0 0 14 10'><path d='M0.7 4.6C2.2 1.8 4.5 0.7 6.8 0.7C9.1 0.7 11.4 1.8 12.9 4.6C11.4 7.4 9.1 8.5 6.8 8.5C4.5 8.5 2.2 7.4 0.7 4.6Z' fill='none' stroke='#333' stroke-width='1'/><path d='M3.5 8.2Q6.8 9.6 10.1 8.2' stroke='#333' stroke-width='0.9' fill='none'/><circle cx='6.9' cy='4' r='2.7' fill='#333'/><circle cx='5.9' cy='3' r='0.8' fill='#888'/></svg>
<svg style='left:74px;top:558px' width='12' height='11' viewBox='0 0 12 11'><path d='M5.1 0.2H7.3V5.9L9.9 3.3L11.8 5.2L6.2 10.8L0.6 5.2L2.5 3.3L5.1 5.9Z' fill='#333'/></svg>
<div class='ab' style='left:19px;top:612.08px;width:567px;height:1px;background:#ddd'></div>
<div class='t' style='left:116px;top:590px;font-size:12px;line-height:12px;letter-spacing:-0.13px'>Mid-Term Performance Review 2020 - Rwanda</div>
<svg style='left:35px;top:591px' width='14' height='10' viewBox='0 0 14 10'><path d='M0.7 4.6C2.2 1.8 4.5 0.7 6.8 0.7C9.1 0.7 11.4 1.8 12.9 4.6C11.4 7.4 9.1 8.5 6.8 8.5C4.5 8.5 2.2 7.4 0.7 4.6Z' fill='none' stroke='#333' stroke-width='1'/><path d='M3.5 8.2Q6.8 9.6 10.1 8.2' stroke='#333' stroke-width='0.9' fill='none'/><circle cx='6.9' cy='4' r='2.7' fill='#333'/><circle cx='5.9' cy='3' r='0.8' fill='#888'/></svg>
<svg style='left:74px;top:590px' width='12' height='11' viewBox='0 0 12 11'><path d='M5.1 0.2H7.3V5.9L9.9 3.3L11.8 5.2L6.2 10.8L0.6 5.2L2.5 3.3L5.1 5.9Z' fill='#333'/></svg>
<div class='ab' style='left:19px;top:644.50px;width:567px;height:1px;background:#ddd'></div>
<div class='t' style='left:116px;top:622px;font-size:12px;line-height:12px;letter-spacing:-0.13px'>Mid-Term Performance Review 2020 - South Sudan</div>
<svg style='left:35px;top:624px' width='14' height='10' viewBox='0 0 14 10'><path d='M0.7 4.6C2.2 1.8 4.5 0.7 6.8 0.7C9.1 0.7 11.4 1.8 12.9 4.6C11.4 7.4 9.1 8.5 6.8 8.5C4.5 8.5 2.2 7.4 0.7 4.6Z' fill='none' stroke='#333' stroke-width='1'/><path d='M3.5 8.2Q6.8 9.6 10.1 8.2' stroke='#333' stroke-width='0.9' fill='none'/><circle cx='6.9' cy='4' r='2.7' fill='#333'/><circle cx='5.9' cy='3' r='0.8' fill='#888'/></svg>
<svg style='left:74px;top:622px' width='12' height='11' viewBox='0 0 12 11'><path d='M5.1 0.2H7.3V5.9L9.9 3.3L11.8 5.2L6.2 10.8L0.6 5.2L2.5 3.3L5.1 5.9Z' fill='#333'/></svg>
<div class='ab' style='left:19px;top:676.92px;width:567px;height:1px;background:#ddd'></div>
<div class='t' style='left:116px;top:655px;font-size:12px;line-height:12px;letter-spacing:-0.13px'>Mid-Term Performance Review 2020 - South Africa</div>
<svg style='left:35px;top:656px' width='14' height='10' viewBox='0 0 14 10'><path d='M0.7 4.6C2.2 1.8 4.5 0.7 6.8 0.7C9.1 0.7 11.4 1.8 12.9 4.6C11.4 7.4 9.1 8.5 6.8 8.5C4.5 8.5 2.2 7.4 0.7 4.6Z' fill='none' stroke='#333' stroke-width='1'/><path d='M3.5 8.2Q6.8 9.6 10.1 8.2' stroke='#333' stroke-width='0.9' fill='none'/><circle cx='6.9' cy='4' r='2.7' fill='#333'/><circle cx='5.9' cy='3' r='0.8' fill='#888'/></svg>
<svg style='left:74px;top:655px' width='12' height='11' viewBox='0 0 12 11'><path d='M5.1 0.2H7.3V5.9L9.9 3.3L11.8 5.2L6.2 10.8L0.6 5.2L2.5 3.3L5.1 5.9Z' fill='#333'/></svg>
<div class='ab' style='left:108px;top:321px;width:1px;height:358px;background:#ddd'></div>
<div class='ab' style='left:1547px;top:321px;width:17px;height:358px;background:#f1f1f1'></div>
<svg style='left:1551px;top:326px' width='9' height='5'><path d='M0 4.5L4.5 0L9 4.5Z' fill='#a3a3a3'/></svg>
<div class='ab' style='left:1549px;top:337px;width:13px;height:277px;background:#c1c1c1'></div>
<svg style='left:1551px;top:668px' width='9' height='5'><path d='M0 0H9L4.5 4.5Z' fill='#505050'/></svg>
<div class='t s12' style='left:37px;top:695px;font-size:12px;line-height:12px;color:#333'>entries</div>
</body></html>
